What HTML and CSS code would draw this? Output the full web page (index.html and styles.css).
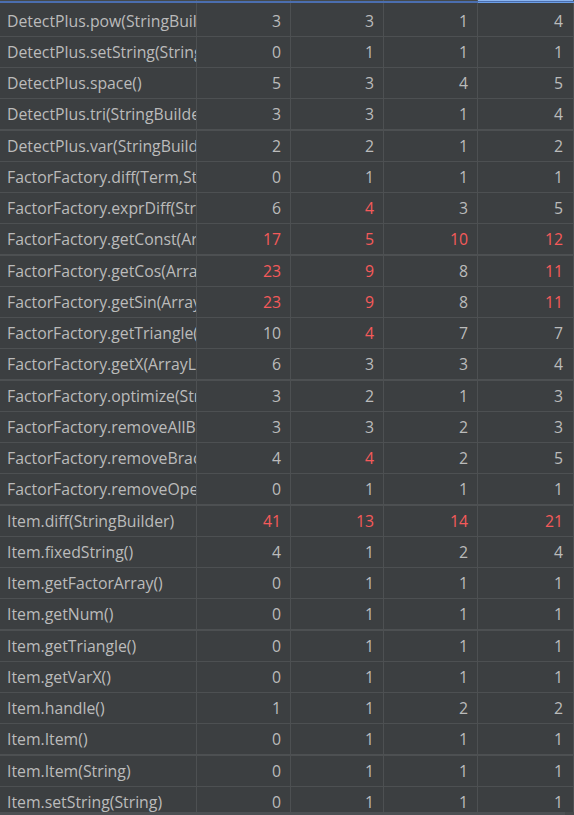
FILE: index.html
```html
<!DOCTYPE html>
<html>
<head>
<meta charset="utf-8">
<link rel="stylesheet" href="styles.css">
</head>
<body>
<div class="view">
  <div class="header">
    <div class="hcell name"></div>
    <div class="hcell c2"></div>
    <div class="hcell c3"></div>
    <div class="hcell c4"></div>
    <div class="hcell c5 sel"></div>
  </div>
  <div class="body">
    <div class="row first"><div class="cell name">DetectPlus.pow(StringBuilder)</div><div class="cell c2">3</div><div class="cell c3">3</div><div class="cell c4">1</div><div class="cell c5">4</div></div>
    <div class="row"><div class="cell name">DetectPlus.setString(String)</div><div class="cell c2">0</div><div class="cell c3">1</div><div class="cell c4">1</div><div class="cell c5">1</div></div>
    <div class="row"><div class="cell name">DetectPlus.space()</div><div class="cell c2">5</div><div class="cell c3">3</div><div class="cell c4">4</div><div class="cell c5">5</div></div>
    <div class="row thick"><div class="cell name">DetectPlus.tri(StringBuilder)</div><div class="cell c2">3</div><div class="cell c3">3</div><div class="cell c4">1</div><div class="cell c5">4</div></div>
    <div class="row"><div class="cell name">DetectPlus.var(StringBuilder)</div><div class="cell c2">2</div><div class="cell c3">2</div><div class="cell c4">1</div><div class="cell c5">2</div></div>
    <div class="row"><div class="cell name">FactorFactory.diff(Term,StringBuilder)</div><div class="cell c2">0</div><div class="cell c3">1</div><div class="cell c4">1</div><div class="cell c5">1</div></div>
    <div class="row"><div class="cell name">FactorFactory.exprDiff(StringBuilder)</div><div class="cell c2">6</div><div class="cell c3 red">4</div><div class="cell c4">3</div><div class="cell c5">5</div></div>
    <div class="row thick"><div class="cell name">FactorFactory.getConst(ArrayList)</div><div class="cell c2 red">17</div><div class="cell c3 red">5</div><div class="cell c4 red">10</div><div class="cell c5 red">12</div></div>
    <div class="row"><div class="cell name">FactorFactory.getCos(ArrayList)</div><div class="cell c2 red">23</div><div class="cell c3 red">9</div><div class="cell c4">8</div><div class="cell c5 red">11</div></div>
    <div class="row"><div class="cell name">FactorFactory.getSin(ArrayList)</div><div class="cell c2 red">23</div><div class="cell c3 red">9</div><div class="cell c4">8</div><div class="cell c5 red">11</div></div>
    <div class="row"><div class="cell name">FactorFactory.getTriangle(ArrayList)</div><div class="cell c2">10</div><div class="cell c3 red">4</div><div class="cell c4">7</div><div class="cell c5">7</div></div>
    <div class="row thick"><div class="cell name">FactorFactory.getX(ArrayList)</div><div class="cell c2">6</div><div class="cell c3">3</div><div class="cell c4">3</div><div class="cell c5">4</div></div>
    <div class="row"><div class="cell name">FactorFactory.optimize(StringBuilder)</div><div class="cell c2">3</div><div class="cell c3">2</div><div class="cell c4">1</div><div class="cell c5">3</div></div>
    <div class="row"><div class="cell name">FactorFactory.removeAllBracket(String)</div><div class="cell c2">3</div><div class="cell c3">3</div><div class="cell c4">2</div><div class="cell c5">3</div></div>
    <div class="row"><div class="cell name">FactorFactory.removeBracket(String)</div><div class="cell c2">4</div><div class="cell c3 red">4</div><div class="cell c4">2</div><div class="cell c5">5</div></div>
    <div class="row thick"><div class="cell name">FactorFactory.removeOperator(String)</div><div class="cell c2">0</div><div class="cell c3">1</div><div class="cell c4">1</div><div class="cell c5">1</div></div>
    <div class="row"><div class="cell name">Item.diff(StringBuilder)</div><div class="cell c2 red">41</div><div class="cell c3 red">13</div><div class="cell c4 red">14</div><div class="cell c5 red">21</div></div>
    <div class="row"><div class="cell name">Item.fixedString()</div><div class="cell c2">4</div><div class="cell c3">1</div><div class="cell c4">2</div><div class="cell c5">4</div></div>
    <div class="row"><div class="cell name">Item.getFactorArray()</div><div class="cell c2">0</div><div class="cell c3">1</div><div class="cell c4">1</div><div class="cell c5">1</div></div>
    <div class="row thick"><div class="cell name">Item.getNum()</div><div class="cell c2">0</div><div class="cell c3">1</div><div class="cell c4">1</div><div class="cell c5">1</div></div>
    <div class="row"><div class="cell name">Item.getTriangle()</div><div class="cell c2">0</div><div class="cell c3">1</div><div class="cell c4">1</div><div class="cell c5">1</div></div>
    <div class="row"><div class="cell name">Item.getVarX()</div><div class="cell c2">0</div><div class="cell c3">1</div><div class="cell c4">1</div><div class="cell c5">1</div></div>
    <div class="row"><div class="cell name">Item.handle()</div><div class="cell c2">1</div><div class="cell c3">1</div><div class="cell c4">2</div><div class="cell c5">2</div></div>
    <div class="row thick"><div class="cell name">Item.Item()</div><div class="cell c2">0</div><div class="cell c3">1</div><div class="cell c4">1</div><div class="cell c5">1</div></div>
    <div class="row"><div class="cell name">Item.Item(String)</div><div class="cell c2">0</div><div class="cell c3">1</div><div class="cell c4">1</div><div class="cell c5">1</div></div>
    <div class="row"><div class="cell name">Item.setString(String)</div><div class="cell c2">0</div><div class="cell c3">1</div><div class="cell c4">1</div><div class="cell c5">1</div></div>
  </div>
  <div class="hscroll"><div class="thumb"></div></div>
</div>
</body>
</html>
```

FILE: styles.css
```css
html, body {
  margin: 0;
  padding: 0;
  background: #3c3f41;
}

.view {
  position: relative;
  width: 574px;
  height: 815px;
  overflow: hidden;
  background: #3c3f41;
  font-family: "Open Sans", "Noto Sans", "Liberation Sans", sans-serif;
  font-size: 15.8px;
  color: #bbbbbb;
}

.header {
  display: flex;
  height: 1px;
  border-bottom: 2px solid #4b6eaf;
  background: #45494a;
}

.hcell {
  box-sizing: border-box;
  height: 1px;
  border-right: 1px solid #55595c;
}

.hcell.sel {
  background: #8ab4f0;
}

.header .sel {
  box-shadow: 0 2px 0 #6b9fe8;
}

.row {
  display: flex;
  height: 30px;
  border-bottom: 1px solid #4d5052;
}

.row.first {
  height: 33px;
}

.row.first .cell {
  padding-top: 3px;
}

.row.thick {
  border-bottom-width: 2px;
}

.cell {
  box-sizing: border-box;
  height: 100%;
  line-height: 30px;
  white-space: nowrap;
  overflow: hidden;
  text-overflow: clip;
  border-right: 1px solid #4d5052;
  text-align: right;
  padding-right: 9px;
}

.name {
  width: 197px;
  flex: none;
  text-align: left;
  padding-left: 7px;
  padding-right: 0;
}

.c2 { width: 94px; flex: none; }
.c3 { width: 93px; flex: none; }
.c4 { width: 94px; flex: none; }
.c5 { width: 96px; flex: none; padding-right: 10px; }

.red {
  color: #f55a5a;
}

.hscroll {
  position: absolute;
  left: 0;
  right: 0;
  bottom: 0;
  height: 3px;
  background: #45484a;
}

.thumb {
  width: 565px;
  height: 3px;
  background: #4d5053;
}
```
